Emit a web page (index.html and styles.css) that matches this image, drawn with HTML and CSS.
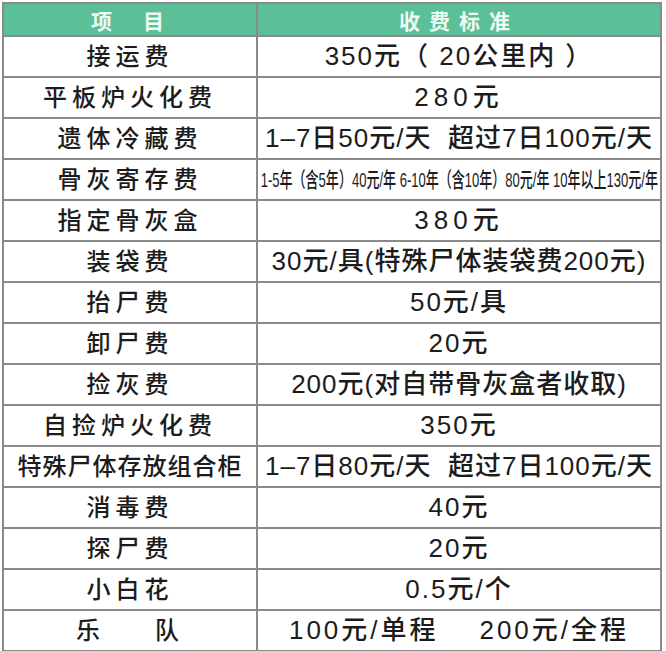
FILE: index.html
```html
<!DOCTYPE html>
<html lang="zh">
<head>
<meta charset="utf-8">
<link rel="stylesheet" href="styles.css">
</head>
<body>
<table class="fees">
  <thead>
    <tr><th class="c1">项<span class="gap"></span>目</th><th class="c2">收费标准</th></tr>
  </thead>
  <tbody>
    <tr><td>接运费</td><td class="paren">350元（ 20公里内 ）</td></tr>
    <tr><td>平板炉火化费</td><td class="wide">280元</td></tr>
    <tr><td>遗体冷藏费</td><td class="tight">1–7日50元/天&nbsp; 超过7日100元/天</td></tr>
    <tr><td>骨灰寄存费</td><td class="small"><span class="squeeze">1-5年（含5年）40元/年 6-10年（含10年）80元/年 10年以上130元/年</span></td></tr>
    <tr><td>指定骨灰盒</td><td class="wide">380元</td></tr>
    <tr><td>装袋费</td><td class="tight">30元/具(特殊尸体装袋费200元)</td></tr>
    <tr><td>抬尸费</td><td>50元/具</td></tr>
    <tr><td>卸尸费</td><td>20元</td></tr>
    <tr><td>捡灰费</td><td class="tight">200元(对自带骨灰盒者收取)</td></tr>
    <tr><td>自捡炉火化费</td><td>350元</td></tr>
    <tr><td class="tightl">特殊尸体存放组合柜</td><td class="tight">1–7日80元/天&nbsp; 超过7日100元/天</td></tr>
    <tr><td>消毒费</td><td>40元</td></tr>
    <tr><td>探尸费</td><td>20元</td></tr>
    <tr><td>小白花</td><td>0.5元/个</td></tr>
    <tr><td>乐<span class="gap2"></span>队</td><td class="band">100元/单程&nbsp;&nbsp;&nbsp; 200元/全程</td></tr>
  </tbody>
</table>
</body>
</html>
```
FILE: styles.css
```css
html, body {
  margin: 0;
  padding: 0;
  background: #ffffff;
}
body {
  padding: 2px 0 0 2px;
  font-family: "Liberation Sans", "Noto Sans CJK SC", sans-serif;
  color: #1c1c1c;
}
.fees {
  border-collapse: collapse;
  width: 660px;
  table-layout: fixed;
}
.fees th, .fees td {
  border: 2px solid #8a8a8a;
  text-align: center;
  padding: 0;
  white-space: nowrap;
  overflow: hidden;
}
.fees th {
  background: #5bbf98;
  color: #eefaf4;
  height: 31px;
  font-size: 21px;
  font-weight: bold;
  letter-spacing: 6px;
}
.fees th.c1 { width: 252px; letter-spacing: 5px; }
.fees th.c2 { letter-spacing: 9px; }
.gap { display: inline-block; width: 26px; }
.gap2 { display: inline-block; width: 50px; }
.fees td {
  height: 39px;
  font-size: 26px;
  font-weight: 500;
  letter-spacing: 2px;
  line-height: 39px;
}
.fees td:first-child {
  font-size: 24px;
  letter-spacing: 5px;
}
.fees td.tightl {
  letter-spacing: 1px;
}
.fees td.tight {
  letter-spacing: 1px;
}
.fees td.wide {
  letter-spacing: 5px;
}
.fees td.paren {
  letter-spacing: 2px;
}
.fees td.band {
  letter-spacing: 3px;
}
.fees td.small {
  font-size: 21px;
  letter-spacing: 0;
}
.squeeze {
  display: inline-block;
  transform: scaleX(0.62);
  transform-origin: center;
  margin: 0 -200px;
}
```
